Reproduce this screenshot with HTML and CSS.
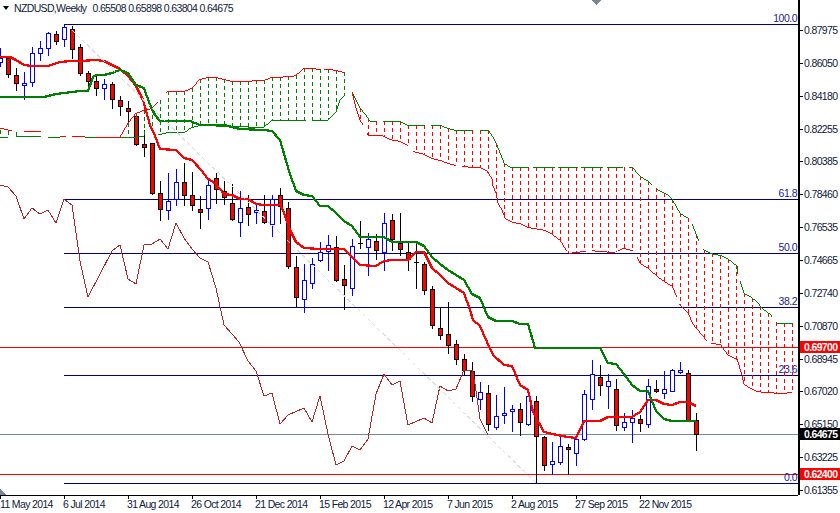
FILE: index.html
```html
<!DOCTYPE html>
<html lang="en">
<head>
<meta charset="utf-8">
<title>NZDUSD, Weekly</title>
<link rel="stylesheet" href="styles.css">
</head>
<body>
<main class="terminal">
  <section class="plot">
    <svg id="chart" class="plot-svg" width="799" height="495" viewBox="0 0 799 495" xmlns="http://www.w3.org/2000/svg">
      <g id="levels"></g>
      <g id="candles"></g>
      <g id="cloud"></g>
      <g id="series"></g>
      <text class="fib" x="797" y="22">100.0</text>
      <text class="fib" x="797" y="197">61.8</text>
      <text class="fib" x="797" y="251">50.0</text>
      <text class="fib" x="797" y="305">38.2</text>
      <text class="fib" x="797" y="373">23.6</text>
      <text class="fib" x="797" y="481">0.0</text>
      <polygon class="marker" points="592,0 601,0 596.5,5"/>
      <polygon class="marker" points="0,489 6,495 0,495"/>
    </svg>
    <p class="legend"><span class="legend-arrow"></span><span>NZDUSD,Weekly</span><span class="legend-ohlc">0.65508 0.65898 0.63804 0.64675</span></p>
  </section>
  <ul class="price-axis">
    <li>0.87975</li><li>0.86050</li><li>0.84180</li><li>0.82255</li><li>0.80385</li>
    <li>0.78460</li><li>0.76535</li><li>0.74665</li><li>0.72740</li><li>0.70870</li>
    <li>0.68945</li><li>0.67020</li><li>0.65150</li><li>0.63225</li><li>0.61355</li>
  </ul>
  <span class="tag tag-high">0.69700</span>
  <span class="tag tag-now">0.64675</span>
  <span class="tag tag-low">0.62400</span>
  <ul class="time-axis">
    <li>11 May 2014</li><li>6 Jul 2014</li><li>31 Aug 2014</li><li>26 Oct 2014</li>
    <li>21 Dec 2014</li><li>15 Feb 2015</li><li>12 Apr 2015</li><li>7 Jun 2015</li>
    <li>2 Aug 2015</li><li>27 Sep 2015</li><li>22 Nov 2015</li>
  </ul>
</main>
<script src="chart.js"></script>
</body>
</html>
```

FILE: styles.css
```css
* { box-sizing: border-box; }
html, body { margin: 0; padding: 0; background: #fff; }
body { font: 10.5px/12px "Liberation Sans", Arial, sans-serif; letter-spacing: -0.65px; color: #000; overflow: hidden; }

.terminal {
  position: relative;
  width: 840px;
  height: 513px;
  display: grid;
  grid-template-columns: 798px 42px;
  grid-template-rows: 495px 18px;
  background: #fff;
}

.plot { position: relative; grid-column: 1; grid-row: 1; }
.plot-svg { display: block; shape-rendering: crispEdges; }

.legend {
  position: absolute;
  left: 3px;
  top: 2px;
  margin: 0;
  display: flex;
  align-items: center;
  gap: 5px;
  white-space: nowrap;
  color: #10203a;
}
.legend-arrow {
  width: 0;
  height: 0;
  border-left: 3.5px solid transparent;
  border-right: 3.5px solid transparent;
  border-top: 4px solid #000;
}
.legend-ohlc { margin-left: 1px; }

.fib {
  font: 10.5px "Liberation Sans", Arial, sans-serif;
  letter-spacing: -0.5px;
  fill: #1c1c8c;
  text-anchor: end;
  shape-rendering: auto;
}
.marker { fill: #778899; }

.price-axis {
  grid-column: 2;
  grid-row: 1 / 3;
  margin: 0;
  padding: 14px 0 0;
  list-style: none;
  height: 495px;
  border-left: 2px solid #000;
}
.price-axis li {
  position: relative;
  height: 32.86px;
  line-height: 33px;
  padding-left: 4px;
  white-space: nowrap;
  color: #10203a;
}
.price-axis li::before {
  content: "";
  position: absolute;
  left: 0;
  top: 16px;
  width: 3px;
  height: 1px;
  background: #000;
}

.tag {
  position: absolute;
  left: 800px;
  width: 40px;
  height: 12px;
  padding-left: 4px;
  line-height: 12px;
  white-space: nowrap;
  color: #fff;
  font-weight: 700;
}
.tag-high { top: 341px; background: #f00; }
.tag-now { top: 428px; background: #000; }
.tag-low { top: 468px; background: #f00; }

.time-axis {
  grid-column: 1;
  grid-row: 2;
  margin: 0;
  padding: 0;
  list-style: none;
  display: flex;
  height: 18px;
  width: 798px;
  border-top: 1px solid #000;
}
.time-axis li {
  position: relative;
  flex: 0 0 64px;
  padding-top: 2px;
  text-indent: -1px;
  white-space: nowrap;
  color: #10203a;
}
.time-axis li:first-child { text-indent: 0; }
.time-axis li::before {
  content: "";
  position: absolute;
  left: 0;
  top: 0;
  width: 1px;
  height: 3px;
  background: #000;
}
```

FILE: chart.js
```js
(function () {
  var NS = 'http://www.w3.org/2000/svg';

  function el(parent, name, attrs) {
    var node = document.createElementNS(NS, name);
    for (var k in attrs) node.setAttribute(k, attrs[k]);
    parent.appendChild(node);
    return node;
  }
  function pts(list) {
    return list.map(function (p) { return p[0] + ',' + p[1]; }).join(' ');
  }
  function line(parent, list, color, width, dash) {
    var a = { points: pts(list), fill: 'none', stroke: color, 'stroke-width': width };
    if (dash) a['stroke-dasharray'] = dash;
    return el(parent, 'polyline', a);
  }
  function yAt(poly, x) {
    for (var i = 1; i < poly.length; i++) {
      if (x <= poly[i][0]) {
        var a = poly[i - 1], b = poly[i];
        return a[1] + (b[1] - a[1]) * (x - a[0]) / ((b[0] - a[0]) || 1);
      }
    }
    return poly[poly.length - 1][1];
  }

  /* horizontal levels */
  var levels = document.getElementById('levels');
  [24, 199, 253, 307, 375, 483].forEach(function (y) {
    el(levels, 'line', { x1: 64, x2: 798, y1: y + 0.5, y2: y + 0.5, stroke: '#000080', 'stroke-width': 1 });
  });
  el(levels, 'line', { x1: 0, x2: 798, y1: 347.5, y2: 347.5, stroke: '#f00', 'stroke-width': 1 });
  el(levels, 'line', { x1: 0, x2: 798, y1: 474.5, y2: 474.5, stroke: '#f00', 'stroke-width': 1 });
  el(levels, 'line', { x1: 0, x2: 798, y1: 434.5, y2: 434.5, stroke: '#778899', 'stroke-width': 1 });

  /* weekly candles: high, body top, body bottom, low, rising; one every 8px */
  var c = [
    [48,58,62,66,1],[56,58,74,77,0],[68,75,83,90,0],[72,83,85,99,1],[47,53,82,86,1],[41,48,53,60,1],
    [32,33,48,55,1],[31,34,41,44,0],[25,27,39,46,1],[26,29,49,58,0],[44,47,73,75,0],[71,73,81,90,0],
    [75,81,88,95,0],[79,84,88,99,1],[82,84,99,108,0],[96,100,106,115,0],[101,108,111,125,0],[115,116,144,145,0],
    [130,144,147,156,0],[143,143,193,194,0],[181,193,209,220,0],[173,201,210,219,1],[169,182,199,205,1],[163,182,195,205,0],
    [172,195,205,210,0],[196,209,212,228,0],[180,185,208,219,1],[173,178,189,203,0],[181,191,197,204,0],[184,203,219,220,0],
    [191,208,222,236,1],[195,207,214,225,0],[204,210,212,223,1],[195,211,222,223,0],[195,199,224,236,1],[188,195,206,223,0],
    [202,208,266,268,0],[256,267,297,306,0],[264,280,299,312,1],[258,264,283,288,1],[242,252,260,261,1],[235,245,251,270,1],
    [236,247,280,281,0],[265,279,285,309,0],[239,246,288,295,1],[221,243,243,248,2],[233,239,247,275,1],[234,241,250,259,0],
    [213,223,252,270,1],[214,220,239,250,0],[213,243,249,255,0],[243,252,259,270,0],[244,262,262,288,2],[262,264,290,294,0],
    [286,289,325,328,0],[308,328,335,339,0],[302,334,345,353,0],[340,344,359,364,0],[354,359,370,375,0],[362,371,396,401,0],
    [382,392,399,409,1],[385,393,424,430,0],[395,416,427,429,1],[387,413,415,423,1],[405,409,411,431,1],[403,409,422,435,0],
    [392,396,424,425,1],[396,401,436,483,0],[436,437,465,470,0],[442,461,464,474,1],[435,446,462,464,1],[444,447,449,474,0],
    [436,439,453,465,1],[390,394,439,440,1],[360,374,399,409,1],[365,377,385,395,0],[374,381,386,408,1],[379,389,425,430,0],
    [413,422,427,430,1],[410,418,422,442,1],[415,419,423,431,0],[379,386,424,427,1],[380,389,391,392,0],[371,389,393,398,1],
    [369,370,391,391,1],[362,370,372,373,1],[370,373,420,420,0],[413,420,434,450,0]
  ];
  var cg = document.getElementById('candles');
  c.forEach(function (d, i) {
    var x = i * 8 + 0.5;
    var kind = d[4];
    var stroke = kind === 1 ? '#00f' : '#000';
    el(cg, 'line', { x1: x, x2: x, y1: d[0], y2: d[3] + 1, stroke: stroke, 'stroke-width': 1 });
    if (kind === 2) {
      el(cg, 'line', { x1: x - 2.5, x2: x + 2.5, y1: d[1] + 0.5, y2: d[1] + 0.5, stroke: stroke, 'stroke-width': 1 });
      return;
    }
    el(cg, 'rect', {
      x: x - 2, y: d[1] + 0.5, width: 4, height: d[2] - d[1],
      fill: kind === 1 ? '#fff' : '#f00', stroke: stroke, 'stroke-width': 1
    });
  });

  /* cloud */
  var upA = [[120,137],[128,123],[136,113],[144,110],[152,108],[160,100],[168,91],[184,91],[192,88],[200,79],[208,77],[216,77],[224,79],[232,81],[248,81],[256,80],[264,80],[272,77],[294,76],[300,72],[304,68],[312,68],[320,69],[330,69],[336,70],[344,72]];
  var loA = [[120,137],[152,136],[160,134],[168,132],[185,132],[192,127],[200,125],[264,127],[272,120],[328,120],[336,112],[340,100],[344,96]];
  var upB = [[352,92],[356,100],[360,108],[366,115],[370,121],[400,121],[407,125],[440,125],[448,128],[455,130],[488,130],[493,137],[497,145],[504,163],[510,167],[632,167],[640,176],[648,181],[657,189],[668,195],[672,199],[680,213],[688,218],[692,224],[699,241],[703,249],[710,253],[720,255],[727,258],[737,266],[738,274],[740,281],[744,293],[750,296],[757,302],[762,308],[770,314],[777,323],[792,323]];
  var loB = [[352,92],[356,108],[360,120],[363,125],[368,135],[382,135],[389,139],[400,141],[408,145],[413,151],[424,154],[432,158],[440,160],[448,163],[456,165],[472,167],[480,167],[487,171],[492,179],[493,186],[496,193],[498,203],[502,210],[505,218],[512,222],[520,223],[528,227],[545,230],[552,234],[560,240],[568,253],[592,250],[598,251],[615,252],[623,248],[632,250],[637,257],[640,263],[648,268],[658,277],[664,281],[672,286],[677,297],[679,304],[688,313],[693,324],[697,329],[707,341],[712,343],[720,344],[728,355],[737,359],[742,375],[744,384],[752,389],[757,391],[765,392],[782,393],[792,392]];

  var cl = document.getElementById('cloud');
  function hatch(from, to, up, lo, color) {
    for (var x = from; x <= to; x += 8) {
      var t = Math.round(yAt(up, x)), b = Math.round(yAt(lo, x));
      if (b - t > 1) {
        el(cl, 'line', { x1: x + 0.5, x2: x + 0.5, y1: t, y2: b, stroke: color, 'stroke-width': 1, 'stroke-dasharray': '4 3' });
      }
    }
  }
  hatch(0, 16, [[0,130],[16,132]], [[0,137],[16,137]], '#008000');
  hatch(128, 344, upA, loA, '#008000');
  hatch(352, 792, upB, loB, '#f00');

  function parts(poly, gaps, color) {
    /* draw the boundary, leaving out the listed x ranges */
    var run = [];
    function flush() { if (run.length > 1) line(cl, run, color, 1); run = []; }
    for (var x = poly[0][0]; x <= poly[poly.length - 1][0]; x += 1) {
      var skip = gaps.some(function (g) { return x > g[0] && x < g[1]; });
      if (skip) { flush(); continue; }
      run.push([x, Math.round(yAt(poly, x))]);
    }
    flush();
  }
  /* small older cloud at the far left */
  line(cl, [[0,128],[8,130],[12,131]], '#f00', 1);
  line(cl, [[24,131],[41,131]], '#f00', 1);
  line(cl, [[0,137],[8,137]], '#008000', 1);
  line(cl, [[16,136],[41,136]], '#008000', 1);
  line(cl, [[48,137],[60,137]], '#008000', 1);
  line(cl, [[60,136],[66,136]], '#f00', 1);
  line(cl, [[72,136],[85,136]], '#f00', 1);
  line(cl, [[85,137],[96,137]], '#008000', 1);
  line(cl, [[96,137],[120,137]], '#f00', 1);

  parts(upA, [[158,166],[321,324]], '#f00');
  parts(loA, [[144,158],[167,168],[306,312]], '#008000');
  parts(upB, [[376,383],[425,431],[472,480],[528,533],[555,558],[578,581],[603,607],[623,629],[652,657],[688,692],[699,703],[738,740],[772,776]], '#008000');
  parts(loB, [[363,367],[408,413],[456,462],[567,569],[586,592],[615,618],[633,637],[677,679],[693,694],[707,711]], '#f00');

  /* moving averages, momentum line and trend line */
  var s = document.getElementById('series');
  line(s, [[0,57],[10,57],[16,60],[24,65],[32,66],[48,66],[60,62],[72,61],[80,61],[96,60],[104,61],[112,65],[120,69],[128,76],[136,86],[143,100],[150,125],[155,136],[160,149],[176,150],[184,158],[192,160],[202,171],[207,178],[216,184],[224,194],[232,195],[240,199],[248,199],[256,204],[264,205],[280,205],[283,210],[290,230],[296,242],[304,248],[320,249],[344,249],[352,257],[360,265],[376,266],[384,261],[392,260],[408,260],[416,252],[424,252],[432,268],[440,275],[448,283],[456,288],[464,293],[470,310],[473,320],[480,326],[487,342],[493,355],[504,365],[512,366],[520,385],[528,390],[533,412],[544,432],[557,435],[568,437],[576,438],[584,421],[600,421],[608,417],[632,417],[640,412],[648,400],[656,400],[664,404],[672,405],[680,402],[688,402],[696,406]], '#f00', 2.25);
  line(s, [[0,97],[44,97],[48,96],[56,94],[64,93],[80,91],[88,91],[93,77],[96,75],[104,75],[112,73],[120,70],[128,73],[136,85],[144,88],[150,105],[155,115],[160,121],[190,121],[200,125],[224,125],[240,129],[264,130],[272,131],[280,140],[289,171],[296,191],[304,195],[312,196],[320,206],[328,206],[336,213],[344,221],[352,226],[360,237],[384,237],[392,242],[416,242],[424,246],[432,257],[440,264],[448,270],[464,280],[472,294],[480,298],[488,317],[496,321],[512,321],[520,324],[528,324],[535,348],[600,348],[608,363],[616,364],[624,374],[632,385],[640,391],[648,391],[656,411],[664,419],[672,421],[696,421]], '#008000', 2.25);
  line(s, [[0,185],[8,187],[16,196],[24,219],[32,208],[40,214],[48,210],[56,223],[64,199],[72,205],[80,261],[88,297],[112,251],[120,245],[128,279],[136,284],[144,245],[152,244],[160,239],[168,249],[176,223],[184,238],[192,249],[200,258],[208,262],[216,288],[224,325],[232,334],[239,342],[248,361],[256,371],[264,396],[272,393],[280,424],[288,415],[304,408],[312,422],[320,396],[328,434],[336,465],[344,461],[352,446],[360,450],[368,439],[376,394],[384,374],[392,385],[400,381],[408,425],[424,418],[432,423],[440,386],[448,391],[456,389],[464,370],[472,370],[475,384],[480,419],[488,435]], '#a52a2a', 1);
  line(s, [[72,30],[536,483]], '#dcdcdc', 1, '4 3');
})();
```
